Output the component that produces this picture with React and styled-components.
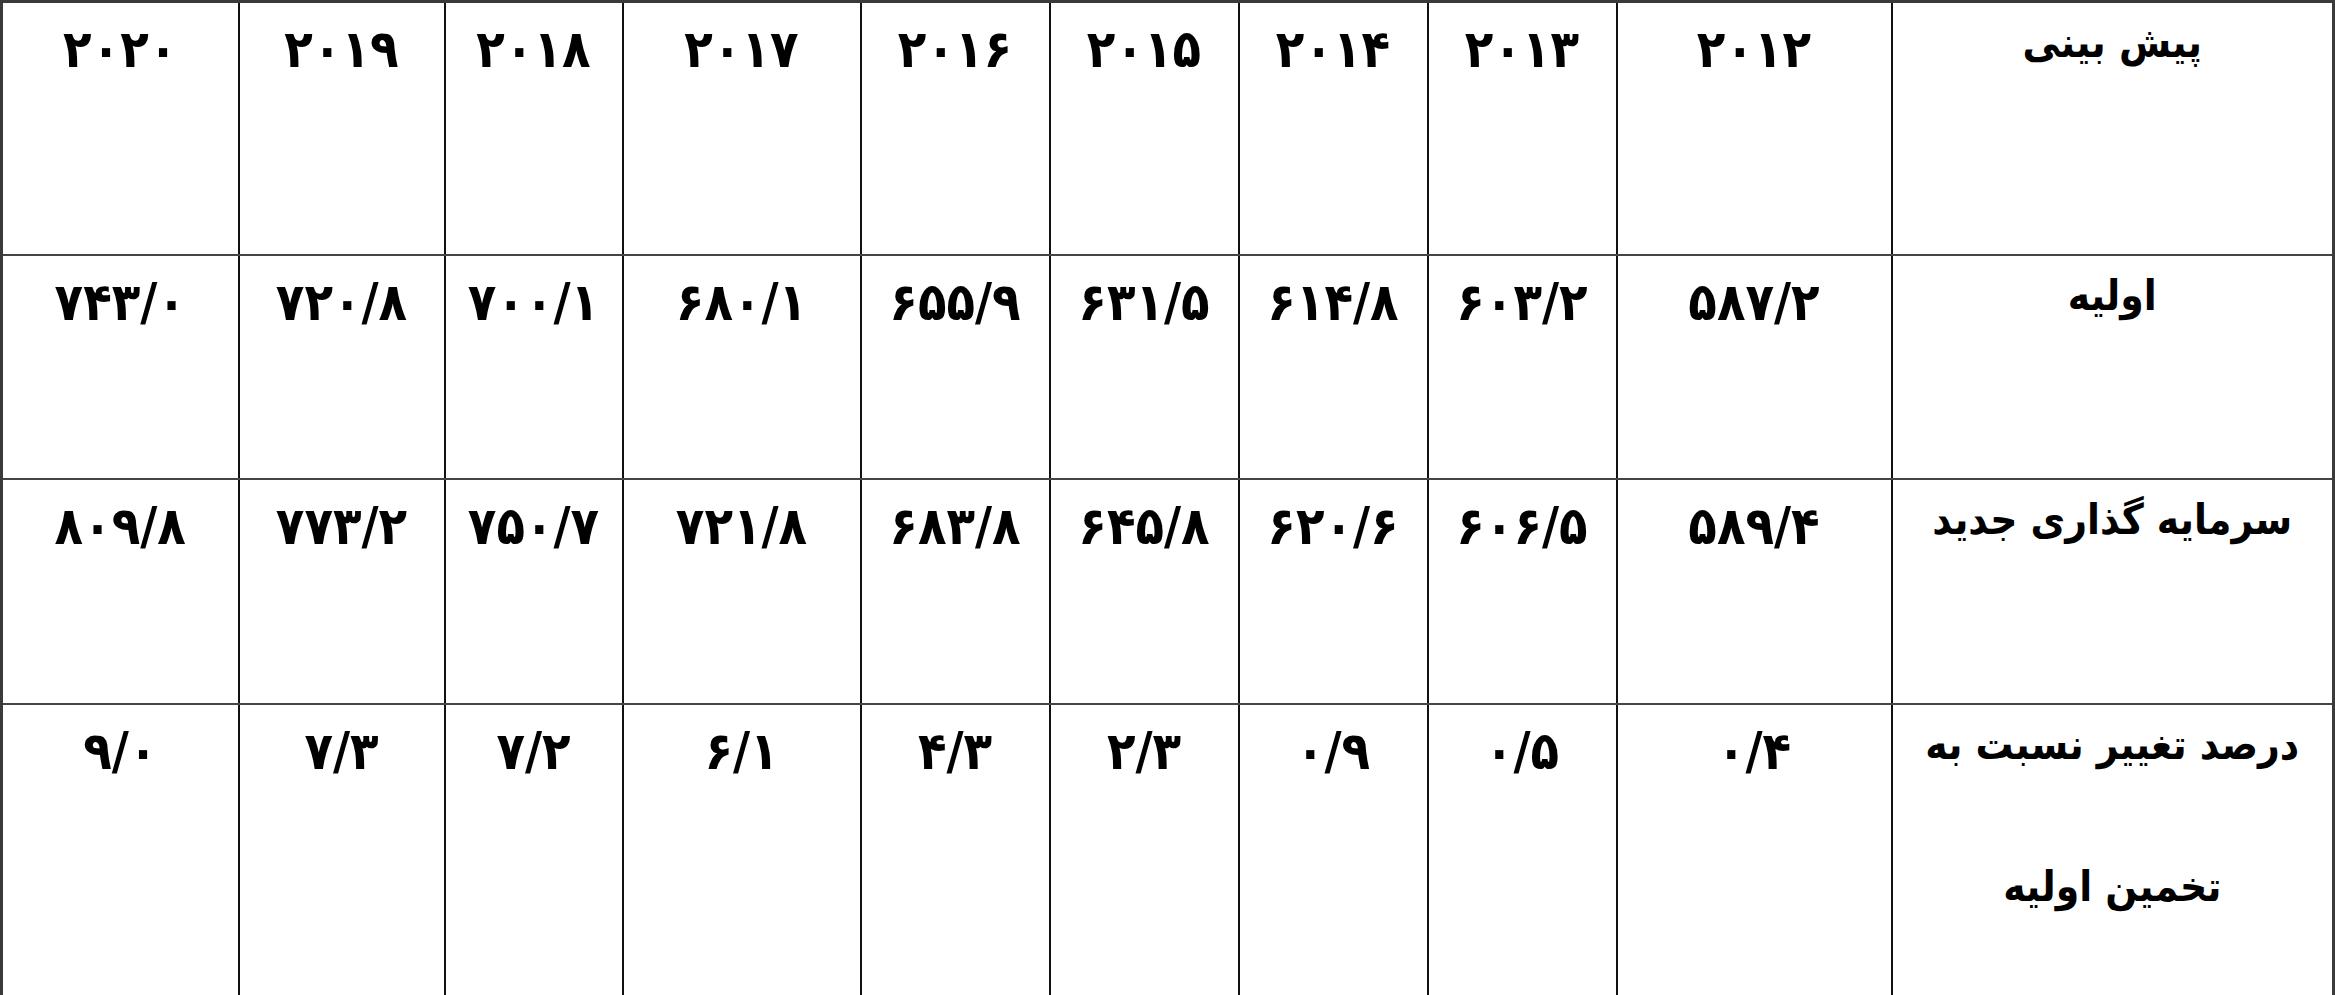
import React from "react";
import styled, { createGlobalStyle } from "styled-components";

const Global = createGlobalStyle`
  html, body { margin: 0; padding: 0; background: #fff; }
  body { font-family: "DejaVu Sans", "Noto Sans", sans-serif; }
`;

const Table = styled.table`
  width: 2335px;
  height: 995px;
  border-collapse: collapse;
  table-layout: fixed;
  direction: rtl;
  background: #fff;
  color: #000;
  font-family: "DejaVu Sans Condensed", "DejaVu Sans", sans-serif;
  font-weight: bold;
  border: 3px solid #3a3a3a;
`;

const Row = styled.tr`
  height: ${(p) => p.$h}px;
`;

const Cell = styled.td`
  border-left: 2px solid #111;
  border-right: 2px solid #111;
  border-top: 2px solid #444;
  border-bottom: 2px solid #444;
  vertical-align: top;
  text-align: center;
  padding: ${(p) => (p.$label ? "12px 8px 0" : "16px 4px 0")};
  font-size: ${(p) => (p.$label ? "42px" : "52px")};
  line-height: ${(p) => (p.$label ? "56px" : "60px")};
`;

const LabelLines = styled.div`
  display: flex;
  flex-direction: column;
  align-items: center;
  gap: 86px;
`;

const widths = [442, 275, 189, 189, 189, 189, 238, 178, 206, 237];

const rows = [
  { h: 253, label: "پیش بینی", values: ["۲۰۱۲", "۲۰۱۳", "۲۰۱۴", "۲۰۱۵", "۲۰۱۶", "۲۰۱۷", "۲۰۱۸", "۲۰۱۹", "۲۰۲۰"] },
  { h: 224, label: "اولیه", values: ["۵۸۷/۲", "۶۰۳/۲", "۶۱۴/۸", "۶۳۱/۵", "۶۵۵/۹", "۶۸۰/۱", "۷۰۰/۱", "۷۲۰/۸", "۷۴۳/۰"] },
  { h: 225, label: "سرمایه گذاری جدید", values: ["۵۸۹/۴", "۶۰۶/۵", "۶۲۰/۶", "۶۴۵/۸", "۶۸۳/۸", "۷۲۱/۸", "۷۵۰/۷", "۷۷۳/۲", "۸۰۹/۸"] },
  { h: 293, label: ["درصد تغییر نسبت به", "تخمین اولیه"], values: ["۰/۴", "۰/۵", "۰/۹", "۲/۳", "۴/۳", "۶/۱", "۷/۲", "۷/۳", "۹/۰"] },
];

export default function App() {
  return (
    <>
      <Global />
      <Table>
        <colgroup>
          {widths.map((w, i) => (
            <col key={i} style={{ width: w }} />
          ))}
        </colgroup>
        <tbody>
          {rows.map((r, i) => (
            <Row key={i} $h={r.h}>
              <Cell $label>
                {Array.isArray(r.label) ? (
                  <LabelLines>
                    {r.label.map((l) => (
                      <span key={l}>{l}</span>
                    ))}
                  </LabelLines>
                ) : (
                  r.label
                )}
              </Cell>
              {r.values.map((v, j) => (
                <Cell key={j}>{v}</Cell>
              ))}
            </Row>
          ))}
        </tbody>
      </Table>
    </>
  );
}
